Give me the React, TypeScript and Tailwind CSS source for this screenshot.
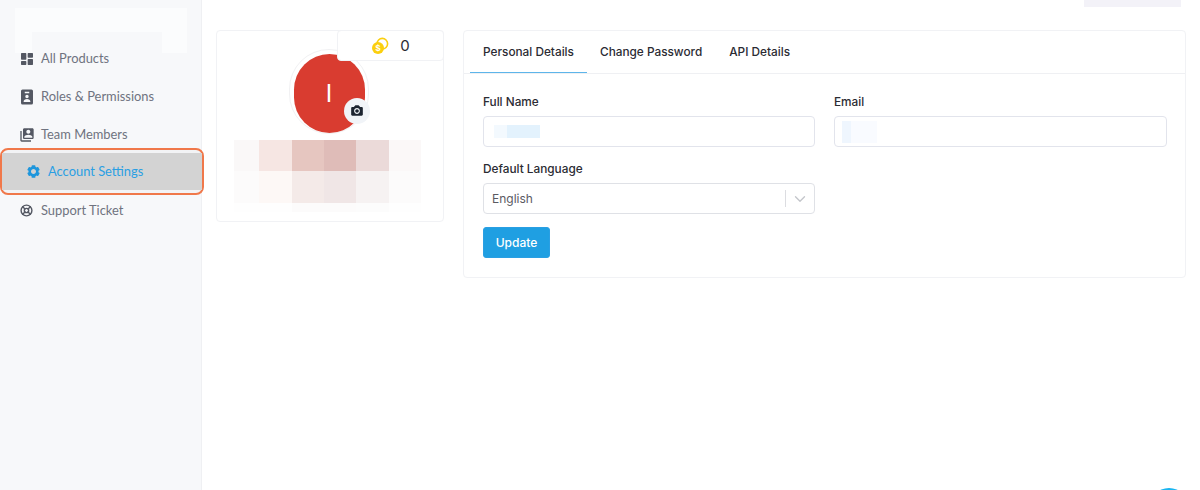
import { BiSolidCamera, BiSolidCog, BiSolidDashboard, BiSolidUserBadge } from 'react-icons/bi';
import { MdSwitchAccount } from 'react-icons/md';
import { ChevronDown, LifeBuoy } from 'lucide-react';

const sideItems = [
  { label: 'All Products', icon: <BiSolidDashboard className="h-[16px] w-[16px] shrink-0" /> },
  { label: 'Roles & Permissions', icon: <BiSolidUserBadge className="h-[18px] w-[18px] shrink-0" /> },
  { label: 'Team Members', icon: <MdSwitchAccount className="h-[16px] w-[16px] shrink-0" /> },
];

const nameBlur = [
  '#faf8f8', '#f6e6e3', '#e6c6c0', '#dfbcb8', '#ebdad9', '#fbf8f8',
  '#fcfbfb', '#fdf8f6', '#f4eae8', '#f0e6e6', '#f6f2f2', '#fcfbfb',
  '#fefefe', '#fefefe', '#fcfbfb', '#fcfbfb', '#fcfcfc', '#fefefe',
];

const CoinIcon = () => (
  <svg width="18" height="18" viewBox="0 0 18 18" fill="none">
    <circle cx="11.3" cy="6.7" r="5.3" stroke="#fbcf0e" strokeWidth="1.6" />
    <circle cx="7" cy="11" r="6" fill="#fbcf0e" />
    <text x="7" y="14.2" textAnchor="middle" fontSize="9" fontWeight="700" fill="#ffffff" fontFamily="Liberation Sans, sans-serif">
      $
    </text>
  </svg>
);

const Field = ({ label, children, className }: { label: string; children: React.ReactNode; className?: string }) => (
  <div className={className}>
    <div className="mb-[6px] h-[18px] text-[11.8px] leading-[20px] font-medium text-[#2b2b33]">{label}</div>
    {children}
  </div>
);

export default function App() {
  return (
    <div className="relative flex h-[490px] w-[1200px] overflow-hidden bg-white font-['Inter',sans-serif]">
      {/* sidebar */}
      <aside className="flex w-[202px] shrink-0 flex-col border-r border-[#eff0f3] bg-[#f7f8fa] pt-[8px] font-['Lato',sans-serif]">
        <div className="mb-[-13px] ml-[15px] flex h-[45px] w-[172px] flex-col">
          <div className="h-[24px] w-full bg-[#fbfcfd]" />
          <div className="flex h-[21px] justify-between">
            <div className="w-[17px] bg-[#fbfcfd]" />
            <div className="w-[25px] bg-[#fbfcfd]" />
          </div>
        </div>
        {sideItems.map((item) => (
          <div key={item.label} className="relative flex h-[38px] items-center gap-[8px] pl-[20px] text-[12.9px] text-[#6f7380]">
            <span className="flex w-[13px] justify-center text-[#545863]">{item.icon}</span>
            {item.label}
          </div>
        ))}
        <div className="relative z-10 mt-[-6px] h-[47px] w-[204px] rounded-[8px] border-2 border-[#f0784a] bg-[#f2f3f5] py-[3px]">
          <div className="flex h-full items-center gap-[7px] bg-[#d3d3d3] pl-[24px] text-[12.9px] text-[#2a9fe3]">
            <BiSolidCog className="h-[15px] w-[15px] text-[#1e96dc]" />
            Account Settings
          </div>
        </div>
        <div className="flex h-[31px] items-center gap-[8px] pl-[20px] text-[12.9px] text-[#6f7380]">
          <span className="flex w-[13px] justify-center text-[#545863]">
            <LifeBuoy className="h-[13px] w-[13px] shrink-0" strokeWidth={2.6} />
          </span>
          Support Ticket
        </div>
      </aside>

      {/* main */}
      <main className="flex flex-1 flex-col">
        <div className="flex h-[30px] justify-end pr-[19px]">
          <div className="h-[7px] w-[97px] bg-[#f3f2f8]" />
        </div>
        <div className="flex items-start gap-[19px] pl-[14px]">
          {/* profile card */}
          <section className="relative flex h-[192px] w-[228px] flex-col items-center rounded-[4px] border border-[#f1f2f5] bg-white">
            <div className="absolute top-[-1px] right-[-1px] z-10 flex h-[31px] w-[107px] items-center justify-center gap-[11px] rounded-[4px] border border-[#f1f2f5] bg-white text-[15px] text-[#2b2b33]">
              <CoinIcon />
              <span className="pt-[1px]">0</span>
            </div>
            <div className="mt-[18px] mr-[2px] flex h-[85px] w-[80px] justify-center rounded-full border border-[#f1f1f3] pt-[4px]">
              <div className="relative flex h-[79px] w-[71px] items-center justify-center rounded-full bg-[#d93c30] text-[24px] text-white">
                I
                <div className="absolute right-[-5px] bottom-[9px] flex h-[26px] w-[26px] items-center justify-center rounded-full bg-[#f1f4f8] text-[#1c2430]">
                  <BiSolidCamera className="h-[14px] w-[14px]" />
                </div>
              </div>
            </div>
            <div className="mt-[6px] mr-[5px] grid w-[187px] grid-cols-[25px_33px_32px_32px_33px_32px] grid-rows-[31px_32px_9px]">
              {nameBlur.map((c, i) => (
                <div key={i} style={{ backgroundColor: c }} />
              ))}
            </div>
          </section>

          {/* details card */}
          <section className="h-[248px] w-[723px] rounded-[4px] border border-[#f1f2f5] bg-white">
            <div className="flex h-[43px] items-stretch border-b border-[#eff0f3] pl-[6px] text-[11.8px] leading-[20px] font-medium text-[#2b2b33]">
              <div className="flex w-[117px] items-center justify-center border-b border-[#5db5ea] pt-[1px]">Personal Details</div>
              <div className="ml-[13px] flex items-center">Change Password</div>
              <div className="ml-[27px] flex items-center">API Details</div>
            </div>
            <div className="px-[19px] pt-[18px]">
              <div className="flex gap-[20px]">
                <Field label="Full Name" className="w-[331px]">
                  <div className="flex h-[31px] w-[332px] items-center rounded-[4px] border border-[#e2e4ec] pl-[10px]">
                    <div className="flex h-[13px] w-[46px]">
                      <div className="w-[13px] bg-[#f3f9fe]" />
                      <div className="flex-1 bg-[#e3f2fd]" />
                    </div>
                  </div>
                </Field>
                <Field label="Email" className="w-[333px]">
                  <div className="flex h-[31px] w-[333px] items-center rounded-[4px] border border-[#e2e4ec] pl-[7px]">
                    <div className="flex h-[22px] w-[35px]">
                      <div className="w-[9px] bg-[#eff6fe]" />
                      <div className="flex-1 bg-[#f9fbff]" />
                    </div>
                  </div>
                </Field>
              </div>
              <Field label="Default Language" className="mt-[12px] w-[332px]">
                <div className="flex h-[31px] items-center rounded-[4px] border border-[#dfe1e6] pr-[5px] pl-[8px] text-[12px] text-[#5a5a62]">
                  <span className="flex-1">English</span>
                  <div className="mr-[5px] h-[17px] w-px bg-[#dcdde1]" />
                  <ChevronDown className="h-[18px] w-[18px] text-[#c4c6cb]" strokeWidth={1.8} />
                </div>
              </Field>
              <button className="mt-[13px] h-[31px] w-[67px] rounded-[3px] border border-[#2a9fe3] bg-[#1f9fe2] text-[12px] font-medium text-white">
                Update
              </button>
            </div>
          </section>
        </div>
      </main>

      {/* chat bubble peeking in at the corner */}
      <div className="absolute top-[488px] left-[1149px] h-[40px] w-[40px] rounded-full bg-[#1ab5f0]" />
    </div>
  );
}
